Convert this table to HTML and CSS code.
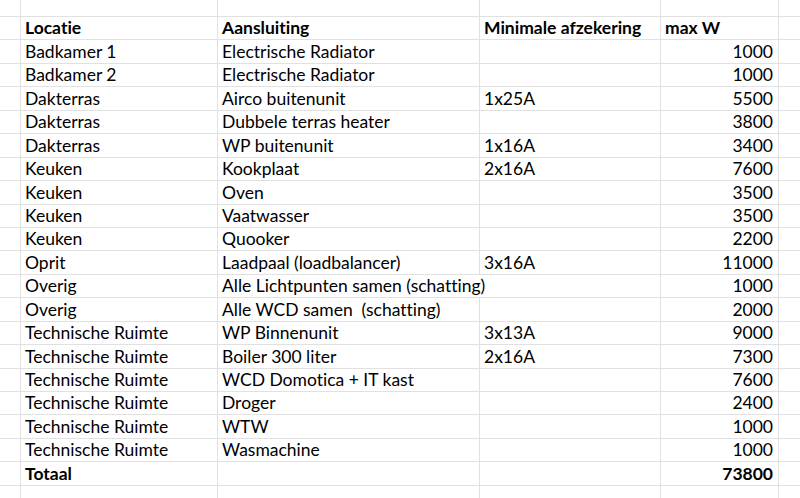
FILE: index.html
```html
<!DOCTYPE html>
<html>
<head>
<meta charset="utf-8">
<link rel="stylesheet" href="styles.css">
</head>
<body>
<div class="sheet">
  <div class="row top"><div class="c"></div><div class="c"></div><div class="c"></div><div class="c"></div><div class="c"></div><div class="c"></div></div>
  <div class="row bold"><div class="c"></div><div class="c">Locatie</div><div class="c">Aansluiting</div><div class="c">Minimale afzekering</div><div class="c">max W</div><div class="c"></div></div>
  <div class="row"><div class="c"></div><div class="c">Badkamer 1</div><div class="c">Electrische Radiator</div><div class="c"></div><div class="c n">1000</div><div class="c"></div></div>
  <div class="row"><div class="c"></div><div class="c">Badkamer 2</div><div class="c">Electrische Radiator</div><div class="c"></div><div class="c n">1000</div><div class="c"></div></div>
  <div class="row"><div class="c"></div><div class="c">Dakterras</div><div class="c">Airco buitenunit</div><div class="c">1x25A</div><div class="c n">5500</div><div class="c"></div></div>
  <div class="row"><div class="c"></div><div class="c">Dakterras</div><div class="c">Dubbele terras heater</div><div class="c"></div><div class="c n">3800</div><div class="c"></div></div>
  <div class="row"><div class="c"></div><div class="c">Dakterras</div><div class="c">WP buitenunit</div><div class="c">1x16A</div><div class="c n">3400</div><div class="c"></div></div>
  <div class="row"><div class="c"></div><div class="c">Keuken</div><div class="c">Kookplaat</div><div class="c">2x16A</div><div class="c n">7600</div><div class="c"></div></div>
  <div class="row"><div class="c"></div><div class="c">Keuken</div><div class="c">Oven</div><div class="c"></div><div class="c n">3500</div><div class="c"></div></div>
  <div class="row"><div class="c"></div><div class="c">Keuken</div><div class="c">Vaatwasser</div><div class="c"></div><div class="c n">3500</div><div class="c"></div></div>
  <div class="row"><div class="c"></div><div class="c">Keuken</div><div class="c">Quooker</div><div class="c"></div><div class="c n">2200</div><div class="c"></div></div>
  <div class="row"><div class="c"></div><div class="c">Oprit</div><div class="c">Laadpaal (loadbalancer)</div><div class="c">3x16A</div><div class="c n">11000</div><div class="c"></div></div>
  <div class="row"><div class="c"></div><div class="c">Overig</div><div class="c span2">Alle Lichtpunten samen (schatting)</div><div class="c n">1000</div><div class="c"></div></div>
  <div class="row"><div class="c"></div><div class="c">Overig</div><div class="c">Alle WCD samen &nbsp;(schatting)</div><div class="c"></div><div class="c n">2000</div><div class="c"></div></div>
  <div class="row"><div class="c"></div><div class="c">Technische Ruimte</div><div class="c">WP Binnenunit</div><div class="c">3x13A</div><div class="c n">9000</div><div class="c"></div></div>
  <div class="row"><div class="c"></div><div class="c">Technische Ruimte</div><div class="c">Boiler 300 liter</div><div class="c">2x16A</div><div class="c n">7300</div><div class="c"></div></div>
  <div class="row"><div class="c"></div><div class="c">Technische Ruimte</div><div class="c">WCD Domotica + IT kast</div><div class="c"></div><div class="c n">7600</div><div class="c"></div></div>
  <div class="row"><div class="c"></div><div class="c">Technische Ruimte</div><div class="c">Droger</div><div class="c"></div><div class="c n">2400</div><div class="c"></div></div>
  <div class="row"><div class="c"></div><div class="c">Technische Ruimte</div><div class="c">WTW</div><div class="c"></div><div class="c n">1000</div><div class="c"></div></div>
  <div class="row"><div class="c"></div><div class="c">Technische Ruimte</div><div class="c">Wasmachine</div><div class="c"></div><div class="c n">1000</div><div class="c"></div></div>
  <div class="row bold"><div class="c"></div><div class="c">Totaal</div><div class="c"></div><div class="c"></div><div class="c n">73800</div><div class="c"></div></div>
  <div class="row rest"><div class="c"></div><div class="c"></div><div class="c"></div><div class="c"></div><div class="c"></div><div class="c"></div></div>
</div>
</body>
</html>
```
FILE: styles.css
```css
html, body {
  margin: 0;
  padding: 0;
  background: #ffffff;
}
body {
  width: 800px;
  height: 498px;
  overflow: hidden;
  font-family: Lato, "Liberation Sans", sans-serif;
  font-size: 17.5px;
  font-variant-ligatures: none;
  color: #000000;
}
.sheet {
  display: flex;
  flex-direction: column;
  gap: 1px;
  background: #e1e1e1;
  height: 498px;
}
.row {
  display: grid;
  grid-template-columns: 20px 196px 261px 180px 117px 1fr;
  column-gap: 1px;
  height: 22.45px;
  flex: none;
}
.row.top {
  height: 16px;
}
.row.rest {
  flex: 1 1 auto;
  height: auto;
}
.c {
  background: #ffffff;
  display: flex;
  align-items: flex-end;
  padding: 0 5px 1px 4px;
  white-space: nowrap;
  overflow: visible;
  line-height: 21px;
  min-width: 0;
}
.span2 {
  grid-column: span 2;
}
.n {
  justify-content: flex-end;
}
.bold .c {
  font-weight: 700;
}
```
